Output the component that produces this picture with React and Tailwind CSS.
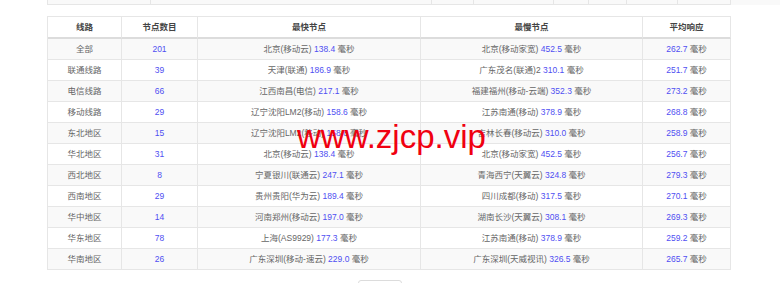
import React from "react";

const rows = [
  ["全部", "201", "北京(移动云)", "138.4", "北京(移动家宽)", "452.5", "262.7"],
  ["联通线路", "39", "天津(联通)", "186.9", "广东茂名(联通)2", "310.1", "251.7"],
  ["电信线路", "66", "江西南昌(电信)", "217.1", "福建福州(移动-云端)", "352.3", "273.2"],
  ["移动线路", "29", "辽宁沈阳LM2(移动)", "158.6", "江苏南通(移动)", "378.9", "268.8"],
  ["东北地区", "15", "辽宁沈阳LM2(移动)", "158.6", "吉林长春(移动云)", "310.0", "258.9"],
  ["华北地区", "31", "北京(移动云)", "138.4", "北京(移动家宽)", "452.5", "256.7"],
  ["西北地区", "8", "宁夏银川(联通云)", "247.1", "青海西宁(天翼云)", "324.8", "279.3"],
  ["西南地区", "29", "贵州贵阳(华为云)", "189.4", "四川成都(移动)", "317.5", "270.1"],
  ["华中地区", "14", "河南郑州(移动云)", "197.0", "湖南长沙(天翼云)", "308.1", "269.3"],
  ["华东地区", "78", "上海(AS9929)", "177.3", "江苏南通(移动)", "378.9", "259.2"],
  ["华南地区", "26", "广东深圳(移动-速云)", "229.0", "广东深圳(天威视讯)", "326.5", "265.7"],
];

const cell = "flex items-center justify-center border-r border-b border-[#e6e6e6]";

function Ms({ name, v }) {
  return (
    <span>
      {name} <span className="text-[#4f4ff2]">{v}</span> 毫秒
    </span>
  );
}

export default function App() {
  return (
    <div
      className="relative w-[780px] h-[283px] overflow-hidden bg-white text-[8.5px] text-[#666]"
      style={{ fontFamily: '"Liberation Sans", "Noto Sans CJK SC", sans-serif' }}
    >
      {/* previous table bottom */}
      <div className="ml-[47px] flex h-[5px] border-l border-[#e6e6e6] bg-[#f9f9f9]">
        {[103, 281, 42, 80, 35, 38, 51, 53].map((w, i) => (
          <div
            key={i}
            className="border-r border-b border-[#e6e6e6]"
            style={{ width: w }}
          />
        ))}
      </div>

      {/* main table */}
      <div className="ml-[47px] mt-[11px] w-[684px] border-l border-t border-[#e6e6e6]">
        <div className="flex h-[22px] font-semibold text-[#444]">
          <div className={`${cell} w-[74px] border-b-2 border-b-[#dcdcdc]`}>线路</div>
          <div className={`${cell} w-[76px] border-b-2 border-b-[#dcdcdc]`}>节点数目</div>
          <div className={`${cell} w-[223px] border-b-2 border-b-[#dcdcdc]`}>最快节点</div>
          <div className={`${cell} w-[222px] border-b-2 border-b-[#dcdcdc]`}>最慢节点</div>
          <div className={`${cell} w-[88px] border-b-2 border-b-[#dcdcdc]`}>平均响应</div>
        </div>
        {rows.map((r, i) => (
          <div
            key={i}
            className={`flex h-[21px] ${i % 2 === 0 ? "bg-[#f9f9f9]" : "bg-white"}`}
          >
            <div className={`${cell} w-[74px]`}>{r[0]}</div>
            <div className={`${cell} w-[76px] text-[#4f4ff2]`}>{r[1]}</div>
            <div className={`${cell} w-[223px]`}>
              <Ms name={r[2]} v={r[3]} />
            </div>
            <div className={`${cell} w-[222px]`}>
              <Ms name={r[4]} v={r[5]} />
            </div>
            <div className={`${cell} w-[88px]`}>
              <span>
                <span className="text-[#4f4ff2]">{r[6]}</span> 毫秒
              </span>
            </div>
          </div>
        ))}
      </div>

      {/* bottom button edge */}
      <div className="ml-[358px] mt-[10px] h-[20px] w-[44px] rounded-[3px] border border-[#dcdcdc] bg-white" />

      {/* watermark */}
      <div
        className="absolute left-[297px] top-[120px] text-[33px] leading-none text-[#f00010] whitespace-nowrap"
        style={{ fontFamily: '"Liberation Sans", Arial, sans-serif' }}
      >
        www.zjcp.vip
      </div>
    </div>
  );
}
